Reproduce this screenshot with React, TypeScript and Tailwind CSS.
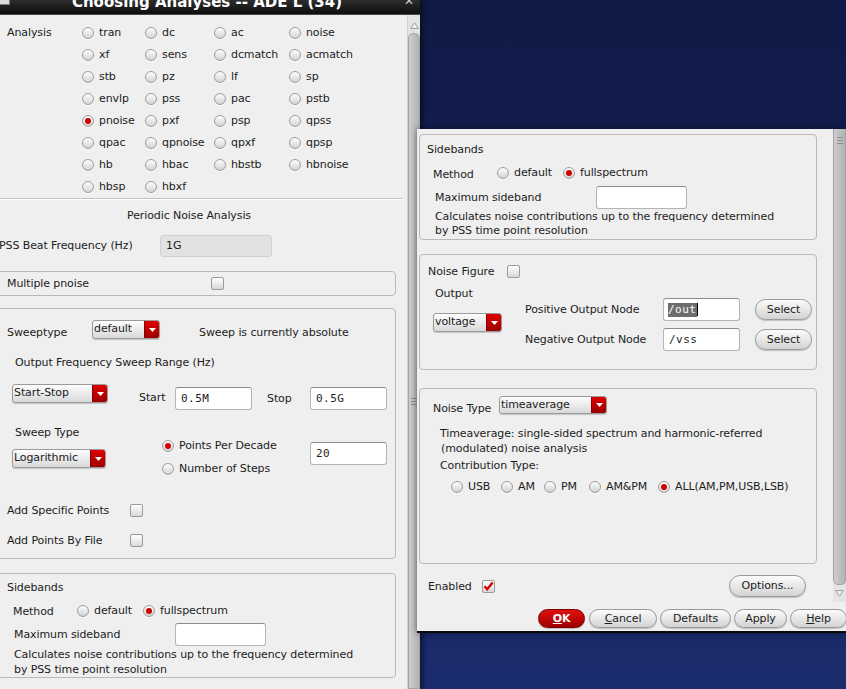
import React from "react";

const analyses = [
  "tran", "dc", "ac", "noise",
  "xf", "sens", "dcmatch", "acmatch",
  "stb", "pz", "lf", "sp",
  "envlp", "pss", "pac", "pstb",
  "pnoise", "pxf", "psp", "qpss",
  "qpac", "qpnoise", "qpxf", "qpsp",
  "hb", "hbac", "hbstb", "hbnoise",
  "hbsp", "hbxf",
];

const Radio = ({ on }: { on?: boolean }) => (
  <span className="w-[12px] h-[12px] shrink-0 rounded-full border border-[#9d9d9d] bg-linear-to-b from-[#ffffff] to-[#d2d2d2] shadow-[0_1px_0_rgba(255,255,255,0.9)] flex items-center justify-center">
    {on && <span className="w-[6px] h-[6px] rounded-full bg-[#d00000]" />}
  </span>
);

const RadioItem = ({ on, label, w }: { on?: boolean; label: string; w?: string }) => (
  <div className={`flex items-center gap-[5px] ${w ?? ""}`}>
    <Radio on={on} />
    <span>{label}</span>
  </div>
);

const Check = ({ on }: { on?: boolean }) => (
  <span className="w-[13px] h-[13px] shrink-0 rounded-[2px] border border-[#9a9a9a] bg-linear-to-b from-white to-[#d8d8d8] flex items-center justify-center">
    {on && (
      <svg width="11" height="10" viewBox="0 0 11 10">
        <path d="M1.5 5.2 L4.2 8.2 L9.6 1.6" stroke="#d00000" strokeWidth="2.4" fill="none" />
      </svg>
    )}
  </span>
);

const Drop = ({ text, w, h }: { text: string; w: string; h?: string }) => (
  <div className={`${w} ${h ?? "h-[19px]"} shrink-0 flex rounded-[3px] border border-[#9b9b9b] bg-linear-to-b from-[#fdfdfd] to-[#d9d9d9] overflow-hidden shadow-[0_1px_1px_rgba(0,0,0,0.18)]`}>
    <span className="flex-1 pl-[1px] leading-[15px]">{text}</span>
    <span className="w-[15px] bg-linear-to-b from-[#e00000] to-[#9c0000] flex items-center justify-center border-l border-[#8a0000]">
      <svg width="7" height="4" viewBox="0 0 7 4">
        <path d="M0 0 H7 L3.5 4 Z" fill="white" />
      </svg>
    </span>
  </div>
);

const Field = ({ w, children, grey }: { w: string; children?: React.ReactNode; grey?: boolean }) => (
  <div
    className={`${w} h-[23px] shrink-0 rounded-[3px] border flex items-center pl-[5px] font-['DejaVu_Sans_Mono',monospace] tracking-[0.5px] ${
      grey ? "bg-[#e2e2e2] border-[#d0d0d0]" : "bg-white border-[#b4b4b4] border-t-[#8c8c8c]"
    }`}
  >
    {children}
  </div>
);

const Btn = ({ w, h, children, red, cls }: { w: string; h: string; children: React.ReactNode; red?: boolean; cls?: string }) => (
  <div
    className={`${w} ${h} ${cls ?? ""} shrink-0 rounded-full border flex items-center justify-center shadow-[0_1px_1px_rgba(0,0,0,0.2)] ${
      red
        ? "border-[#7a0000] bg-linear-to-b from-[#e21010] to-[#a00000] text-white font-bold"
        : "border-[#9a9a9a] bg-linear-to-b from-[#fcfcfc] to-[#d3d3d3]"
    }`}
  >
    {children}
  </div>
);

const Grip = () => (
  <div className="flex flex-col gap-[2px] items-center">
    <span className="w-[6px] h-px bg-[#8c8c8c]" />
    <span className="w-[6px] h-px bg-[#8c8c8c]" />
    <span className="w-[6px] h-px bg-[#8c8c8c]" />
  </div>
);

export default function App() {
  return (
    <div className="relative w-[846px] h-[689px] overflow-hidden bg-linear-to-b from-[#101a46] via-[#152258] to-[#1b2c6e] font-['DejaVu_Sans',sans-serif] text-[11px] leading-[14px] tracking-[-0.1px] text-[#1c1c1c]">
      {/* left window */}
      <div className="absolute left-0 top-0 w-[420px] h-[689px] bg-[#efefef] flex flex-col shadow-[3px_0_5px_rgba(0,0,0,0.5)]">
        <div className="h-[15px] shrink-0 bg-linear-to-b from-[#2e2e2e] to-[#0e0e0e] flex items-start overflow-hidden border-b border-[#4a4a4a]">
          <span className="w-[10px] h-[5px] bg-[#dadada] border-b border-r border-[#777]" />
          <div className="flex-1 text-center text-white font-bold text-[15px] leading-[18px] tracking-normal -mt-[7px]">
            Choosing Analyses -- ADE L (34)
          </div>
          <span className="w-[16px] text-[#cfcfcf] font-bold text-[12px] leading-[12px] -mt-[5px]">✕</span>
        </div>

        <div className="flex flex-1 min-h-0">
          <div className="w-[407px] flex flex-col">
            <div className="flex pt-[7px]">
              <div className="w-[82px] pl-[7px] h-[22px] flex items-center">Analysis</div>
              <div className="grid grid-cols-[63px_69px_75px_1fr]">
                {analyses.map((a) => (
                  <RadioItem key={a} on={a === "pnoise"} label={a} w="h-[22px]" />
                ))}
              </div>
            </div>
            <div className="w-[402px] h-[2px] border-t border-[#c2c2c2] border-b border-b-white" />

            <div className="w-[378px] h-[32px] flex items-center justify-center">Periodic Noise Analysis</div>

            <div className="mt-[3px] h-[22px] flex items-center -ml-[1px]">
              <span className="w-[161px]">PSS Beat Frequency (Hz)</span>
              <div className="w-[112px] h-[22px] rounded-[3px] border border-[#d0d0d0] bg-[#e2e2e2] flex items-center pl-[5px]">1G</div>
            </div>

            <div className="mt-[14px] -ml-[4px] w-[400px] h-[25px] rounded-[4px] border border-[#b9b9b9] flex items-center">
              <span className="ml-[10px] w-[204px] mt-[1px]">Multiple pnoise</span>
              <Check />
            </div>

            <div className="mt-[12px] -ml-[4px] w-[400px] h-[251px] rounded-[4px] border border-[#b9b9b9] flex flex-col">
              <div className="mt-[11px] h-[19px] flex items-center">
                <span className="ml-[10px] w-[85px] mt-[6px]">Sweeptype</span>
                <Drop text="default" w="w-[68px]" />
                <span className="ml-[39px] mt-[6px]">Sweep is currently absolute</span>
              </div>
              <div className="ml-[18px] mt-[17px]">Output Frequency Sweep Range (Hz)</div>
              <div className="mt-[14px] h-[26px] flex items-start">
                <div className="ml-[15px]">
                  <Drop text="Start-Stop" w="w-[96px]" />
                </div>
                <span className="ml-[31px] w-[36px] mt-[7px]">Start</span>
                <div className="mt-[3px]">
                  <Field w="w-[77px]">0.5M</Field>
                </div>
                <span className="ml-[15px] w-[43px] mt-[8px]">Stop</span>
                <div className="mt-[3px]">
                  <Field w="w-[77px]">0.5G</Field>
                </div>
              </div>
              <div className="mt-[15px] flex items-start">
                <div className="ml-[15px] w-[150px] flex flex-col">
                  <span className="ml-[3px] mt-[1px]">Sweep Type</span>
                  <div className="mt-[9px]">
                    <Drop text="Logarithmic" w="w-[94px]" />
                  </div>
                </div>
                <div className="mt-[9px] w-[148px] flex flex-col">
                  <RadioItem on label="Points Per Decade" w="h-[23px]" />
                  <RadioItem label="Number of Steps" w="h-[23px]" />
                </div>
                <div className="mt-[17px]">
                  <Field w="w-[77px]">20</Field>
                </div>
              </div>
              <div className="mt-[19px] h-[22px] flex items-center">
                <span className="ml-[10px] w-[123px] mt-[1px]">Add Specific Points</span>
                <Check />
              </div>
              <div className="mt-[8px] h-[22px] flex items-center">
                <span className="ml-[10px] w-[123px] mt-[1px]">Add Points By File</span>
                <Check />
              </div>
            </div>

            <div className="mt-[14px] -ml-[4px] w-[400px] h-[105px] rounded-[4px] border border-[#b9b9b9] flex flex-col">
              <span className="ml-[10px] mt-[7px]">Sidebands</span>
              <div className="mt-[6px] h-[20px] flex items-center">
                <span className="ml-[16px] w-[64px] mt-[3px]">Method</span>
                <RadioItem label="default" w="w-[66px]" />
                <RadioItem on label="fullspectrum" />
              </div>
              <div className="mt-[3px] h-[23px] flex items-center">
                <span className="ml-[17px] w-[161px]">Maximum sideband</span>
                <Field w="w-[91px]" />
              </div>
              <div className="ml-[17px] mt-[1px] leading-[15px]">
                <div>Calculates noise contributions up to the frequency determined</div>
                <div>by PSS time point resolution</div>
              </div>
            </div>
          </div>

          <div className="w-[13px] flex flex-col bg-[#e4e4e4] border-l border-[#d2d2d2]">
            <div className="h-[17px] shrink-0 flex items-center justify-center pt-[3px]">
              <svg width="9" height="7" viewBox="0 0 9 7">
                <path d="M4.5 0.8 L8.3 6.4 H0.7 Z" fill="#f6f6f6" stroke="#9a9a9a" />
              </svg>
            </div>
            <div className="flex-1 mt-[1px] rounded-t-[5px] bg-linear-to-r from-[#cdcdcd] to-[#b2b2b2] border border-[#a4a4a4] flex flex-col items-center">
              <div className="mt-[364px]">
                <Grip />
              </div>
            </div>
          </div>
        </div>
      </div>

      {/* right window */}
      <div className="absolute left-[417px] top-[129px] w-[429px] h-[504px] bg-[#efefef] border-b-2 border-[#0a0a0a] flex flex-col shadow-[0_0_6px_rgba(0,0,0,0.5)]">
        <div className="h-[473px] flex shrink-0">
          <div className="w-[416px] flex flex-col">
            <div className="ml-[2px] mt-[5px] w-[398px] h-[106px] rounded-[4px] border border-[#b9b9b9] flex flex-col">
              <span className="ml-[7px] mt-[8px]">Sidebands</span>
              <div className="mt-[6px] h-[20px] flex items-center">
                <span className="ml-[13px] w-[64px] mt-[3px]">Method</span>
                <RadioItem label="default" w="w-[66px]" />
                <RadioItem on label="fullspectrum" />
              </div>
              <div className="mt-[3px] h-[23px] flex items-center">
                <span className="ml-[15px] w-[161px]">Maximum sideband</span>
                <Field w="w-[91px]" />
              </div>
              <div className="ml-[15px] mt-[1px]">
                <div>Calculates noise contributions up to the frequency determined</div>
                <div>by PSS time point resolution</div>
              </div>
            </div>

            <div className="ml-[2px] mt-[14px] w-[398px] h-[116px] rounded-[4px] border border-[#b9b9b9] flex flex-col">
              <div className="mt-[9px] h-[14px] flex items-center">
                <span className="ml-[8px] w-[79px] mt-[1px]">Noise Figure</span>
                <Check />
              </div>
              <div className="mt-[8px] flex items-start">
                <div className="ml-[13px] w-[92px] flex flex-col">
                  <span className="ml-[2px] mt-[1px]">Output</span>
                  <div className="mt-[12px]">
                    <Drop text="voltage" w="w-[69px]" />
                  </div>
                </div>
                <div className="mt-[12px] flex flex-col">
                  <div className="h-[23px] flex items-center">
                    <span className="w-[138px]">Positive Output Node</span>
                    <Field w="w-[77px]">
                      <span className="bg-[#6d6d6d] text-white -ml-[1px]">/out</span>
                      <span className="w-px h-[13px] bg-black" />
                    </Field>
                    <Btn w="w-[57px]" h="h-[21px]" cls="ml-[15px]">Select</Btn>
                  </div>
                  <div className="mt-[7px] h-[23px] flex items-center">
                    <span className="w-[138px]">Negative Output Node</span>
                    <Field w="w-[77px]">/vss</Field>
                    <Btn w="w-[57px]" h="h-[21px]" cls="ml-[15px]">Select</Btn>
                  </div>
                </div>
              </div>
            </div>

            <div className="ml-[2px] mt-[18px] w-[398px] h-[176px] rounded-[4px] border border-[#b9b9b9] flex flex-col">
              <div className="mt-[7px] flex items-start">
                <span className="ml-[13px] w-[66px] mt-[6px]">Noise Type</span>
                <Drop text="timeaverage" w="w-[108px]" h="h-[18px]" />
              </div>
              <div className="ml-[20px] mt-[10px] leading-[15px]">
                <div>Timeaverage: single-sided spectrum and harmonic-referred</div>
                <div className="pl-[1px]">(modulated) noise analysis</div>
              </div>
              <div className="ml-[20px] mt-[2px] leading-[15px]">Contribution Type:</div>
              <div className="mt-[4px] h-[20px] flex items-center ml-[31px]">
                <RadioItem label="USB" w="w-[50px]" />
                <RadioItem label="AM" w="w-[43px]" />
                <RadioItem label="PM" w="w-[45px]" />
                <RadioItem label="AM&PM" w="w-[69px]" />
                <RadioItem on label="ALL(AM,PM,USB,LSB)" />
              </div>
            </div>

            <div className="mt-[11px] h-[22px] flex items-center">
              <span className="ml-[11px] w-[54px] mt-[1px]">Enabled</span>
              <Check on />
              <Btn w="w-[77px]" h="h-[22px]" cls="ml-auto mr-[27px]">Options...</Btn>
            </div>
          </div>

          <div className="w-[13px] flex flex-col bg-[#e4e4e4]">
            <div className="h-[456px] rounded-b-[5px] bg-linear-to-r from-[#cdcdcd] to-[#b2b2b2] border border-t-0 border-[#a4a4a4] flex flex-col items-center">
              <div className="mt-[8px]">
                <Grip />
              </div>
            </div>
            <div className="h-[17px] flex items-center justify-center">
              <svg width="9" height="7" viewBox="0 0 9 7">
                <path d="M0.7 0.6 H8.3 L4.5 6.2 Z" fill="#f6f6f6" stroke="#9a9a9a" />
              </svg>
            </div>
          </div>
        </div>

        <div className="mt-[7px] h-[19px] flex justify-end -mr-[1px]">
          <Btn red w="w-[47px]" h="h-[19px]">
            <span className="underline">O</span>K
          </Btn>
          <Btn w="w-[68px]" h="h-[19px]" cls="ml-[4px]">
            <span className="underline">C</span>ancel
          </Btn>
          <Btn w="w-[71px]" h="h-[19px]" cls="ml-[3px]">Defaults</Btn>
          <Btn w="w-[53px]" h="h-[19px]" cls="ml-[3px]">Apply</Btn>
          <Btn w="w-[57px]" h="h-[19px]" cls="ml-[3px]">
            <span className="underline">H</span>elp
          </Btn>
        </div>
      </div>
    </div>
  );
}
